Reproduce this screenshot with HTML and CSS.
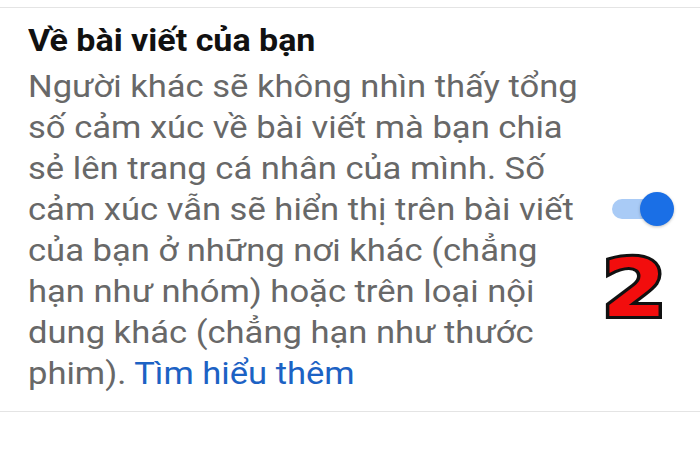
FILE: index.html
```html
<!DOCTYPE html>
<html lang="vi">
<head>
<meta charset="utf-8">
<link rel="stylesheet" href="styles.css">
</head>
<body>
<div class="page">
  <section class="setting">
    <div class="text">
      <h2 class="title">Về bài viết của bạn</h2>
      <p class="desc">Người khác sẽ không nhìn thấy tổng<br>số cảm xúc về bài viết mà bạn chia<br>sẻ lên trang cá nhân của mình. Số<br>cảm xúc vẫn sẽ hiển thị trên bài viết<br>của bạn ở những nơi khác (chẳng<br>hạn như nhóm) hoặc trên loại nội<br>dung khác (chẳng hạn như thước<br>phim). <a class="link" href="#">Tìm hiểu thêm</a></p>
    </div>
    <div class="toggle-col">
      <div class="toggle"><span class="knob"></span></div>
    </div>
    <span class="badge">2</span>
  </section>
</div>
</body>
</html>
```
FILE: styles.css
```css
html, body {
  margin: 0;
  padding: 0;
  background: #fff;
}
body {
  width: 700px;
  height: 471px;
  overflow: hidden;
  font-family: Roboto, "Noto Sans", "Liberation Sans", sans-serif;
}
.page {
  padding-top: 7px;
}
.setting {
  position: relative;
  display: flex;
  align-items: center;
  border-top: 1.5px solid #e4e4e4;
  border-bottom: 1.5px solid #e4e4e4;
  padding: 16px 0 17px 28px;
}
.text {
  width: 525px;
  transform: scaleX(1.115);
  transform-origin: left center;
  white-space: nowrap;
}
.title {
  margin: 0;
  font-size: 30.5px;
  font-weight: 700;
  color: #111;
  line-height: 34px;
}
.desc {
  margin: 8px 0 0;
  font-size: 31px;
  line-height: 41px;
  color: #686868;
}
.link {
  color: #1c62c4;
  text-decoration: none;
}
.toggle-col {
  margin-left: 59px;
}
.toggle {
  position: relative;
  width: 56px;
  height: 20px;
  border-radius: 10px;
  background: #a9cbf6;
}
.knob {
  position: absolute;
  right: -6px;
  top: -7px;
  width: 34px;
  height: 34px;
  border-radius: 50%;
  background: #1a6fe6;
  box-shadow: 0 1px 3px rgba(0,0,0,0.25);
}
.badge {
  position: absolute;
  left: 602px;
  top: 231px;
  font-family: "DejaVu Sans", "Liberation Sans", sans-serif;
  font-weight: 700;
  font-size: 80px;
  line-height: 100px;
  color: #f20d0d;
  -webkit-text-stroke: 6px #111;
  paint-order: stroke fill;
  transform: scaleX(1.16);
  transform-origin: left top;
}
```
